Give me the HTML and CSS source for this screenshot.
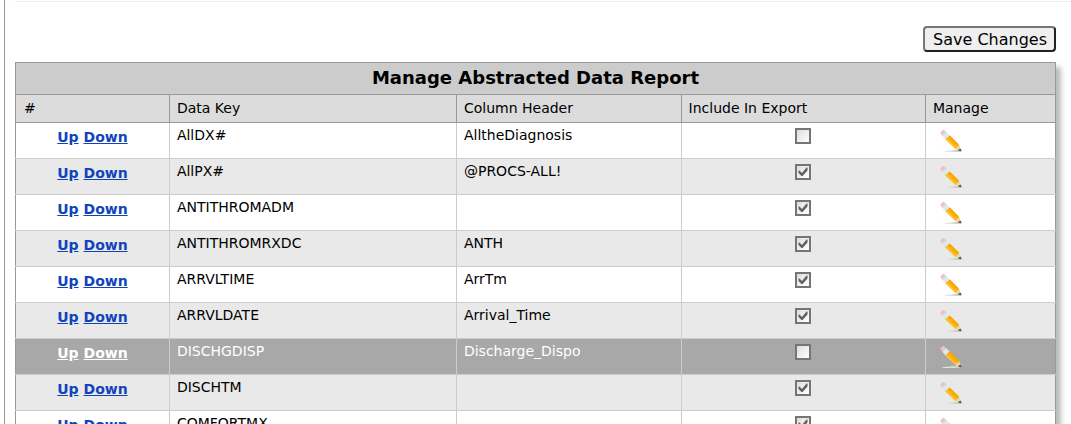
FILE: index.html
```html
<!DOCTYPE html>
<html lang="en">
<head>
<meta charset="utf-8">
<title>Manage Abstracted Data Report</title>
<link rel="stylesheet" href="styles.css">
</head>
<body>
<svg class="defs" width="0" height="0" aria-hidden="true">
  <defs>
    <linearGradient id="shade" x1="0" x2="1" y1="0" y2="0">
      <stop offset="0" stop-color="#f4f4f4"/>
      <stop offset="1" stop-color="#c4c4c4"/>
    </linearGradient>
  </defs>
  <symbol id="pencil" viewBox="0 0 24 24">
    <path d="M3 22.500 19 20.500 22.500 22 20 23H4Z" fill="url(#shade)"/>
    <path d="M1.500 3.500 4.500 1 7 3.500 3.500 6.500Z" fill="#eac6c9" stroke="#e6bfc3" stroke-width=".8" stroke-linejoin="round"/>
    <path d="M3.300 6.700 7.300 3.300 10.800 6.800 6.500 10.500Z" fill="#d8eaee"/>
    <path d="M6.300 10.300 10.800 6.500 20.200 16 16.500 20Z" fill="#fdb00d"/>
    <path d="M6.300 10.300 7.600 9.200 17.700 18.900 16.500 20Z" fill="#ffc535"/>
    <path d="M9.700 7.400 10.800 6.500 20.200 16 19.200 17Z" fill="#f9a400"/>
    <path d="M16.500 20 20.200 16 22.300 21.500 21 22.500Z" fill="#e2d5a8"/>
    <path d="M19.600 21.300 21.300 19.900 22.300 22Z" fill="#555" stroke="#555" stroke-width=".8" stroke-linejoin="round"/>
  </symbol>
</svg>
<main class="page">
  <div class="toolbar"><button class="save" type="button">Save Changes</button></div>
  <table class="report">
    <colgroup><col class="col-order"><col class="col-key"><col class="col-header"><col class="col-export"><col class="col-manage"></colgroup>
    <thead>
      <tr class="title"><th colspan="5">Manage Abstracted Data Report</th></tr>
      <tr class="heads"><th>#</th><th>Data Key</th><th>Column Header</th><th>Include In Export</th><th>Manage</th></tr>
    </thead>
    <tbody>
      <tr><td class="order"><a href="#">Up</a> <a href="#">Down</a></td><td>AllDX#</td><td>AlltheDiagnosis</td><td class="export"><input type="checkbox" aria-label="Include AllDX#"></td><td class="manage"><button type="button" aria-label="Edit AllDX#"><svg><use href="#pencil"/></svg></button></td></tr>
      <tr><td class="order"><a href="#">Up</a> <a href="#">Down</a></td><td>AllPX#</td><td>@PROCS-ALL!</td><td class="export"><input type="checkbox" checked aria-label="Include AllPX#"></td><td class="manage"><button type="button" aria-label="Edit AllPX#"><svg><use href="#pencil"/></svg></button></td></tr>
      <tr><td class="order"><a href="#">Up</a> <a href="#">Down</a></td><td>ANTITHROMADM</td><td></td><td class="export"><input type="checkbox" checked aria-label="Include ANTITHROMADM"></td><td class="manage"><button type="button" aria-label="Edit ANTITHROMADM"><svg><use href="#pencil"/></svg></button></td></tr>
      <tr><td class="order"><a href="#">Up</a> <a href="#">Down</a></td><td>ANTITHROMRXDC</td><td>ANTH</td><td class="export"><input type="checkbox" checked aria-label="Include ANTITHROMRXDC"></td><td class="manage"><button type="button" aria-label="Edit ANTITHROMRXDC"><svg><use href="#pencil"/></svg></button></td></tr>
      <tr><td class="order"><a href="#">Up</a> <a href="#">Down</a></td><td>ARRVLTIME</td><td>ArrTm</td><td class="export"><input type="checkbox" checked aria-label="Include ARRVLTIME"></td><td class="manage"><button type="button" aria-label="Edit ARRVLTIME"><svg><use href="#pencil"/></svg></button></td></tr>
      <tr><td class="order"><a href="#">Up</a> <a href="#">Down</a></td><td>ARRVLDATE</td><td>Arrival_Time</td><td class="export"><input type="checkbox" checked aria-label="Include ARRVLDATE"></td><td class="manage"><button type="button" aria-label="Edit ARRVLDATE"><svg><use href="#pencil"/></svg></button></td></tr>
      <tr class="active"><td class="order"><a href="#">Up</a> <a href="#">Down</a></td><td>DISCHGDISP</td><td>Discharge_Dispo</td><td class="export"><input type="checkbox" aria-label="Include DISCHGDISP"></td><td class="manage"><button type="button" aria-label="Edit DISCHGDISP"><svg><use href="#pencil"/></svg></button></td></tr>
      <tr><td class="order"><a href="#">Up</a> <a href="#">Down</a></td><td>DISCHTM</td><td></td><td class="export"><input type="checkbox" checked aria-label="Include DISCHTM"></td><td class="manage"><button type="button" aria-label="Edit DISCHTM"><svg><use href="#pencil"/></svg></button></td></tr>
      <tr><td class="order"><a href="#">Up</a> <a href="#">Down</a></td><td>COMFORTMX</td><td></td><td class="export"><input type="checkbox" checked aria-label="Include COMFORTMX"></td><td class="manage"><button type="button" aria-label="Edit COMFORTMX"><svg><use href="#pencil"/></svg></button></td></tr>
    </tbody>
  </table>
</main>
</body>
</html>
```
FILE: styles.css
```css
* { box-sizing: border-box; }

html, body { height: 100%; }

body {
  margin: 0;
  overflow: hidden;
  background: #fff;
  color: #000;
  font-family: Verdana, "DejaVu Sans", sans-serif;
  font-size: 14px;
}

.defs { position: absolute; }

.page {
  min-height: 100%;
  margin-left: 4px;
  padding: 1px 15px 0 10px;
  border-left: 1px solid #999;
}

.toolbar {
  display: flex;
  justify-content: flex-end;
  margin-right: -15px;
  padding: 24px 15px 10px 0;
  border-top: 1px solid #eee;
}

.save {
  height: 26px;
  padding: 2px 7px 0 8px;
  border: 2px solid;
  border-color: #767676 #212121 #212121 #767676;
  border-radius: 4px;
  background: #efefef;
  color: #000;
  font: 16px/20px Verdana, "DejaVu Sans", sans-serif;
}

.report {
  width: 100%;
  table-layout: fixed;
  border-collapse: collapse;
  border: 1px solid #999;
  box-shadow: 5px 5px 5px #bbb;
}

.col-order { width: 14.8%; }
.col-key { width: 27.6%; }
.col-header { width: 21.6%; }
.col-export { width: 23.5%; }
.col-manage { width: 12.5%; }

.title th {
  height: 32px;
  padding: 0 0 2px;
  border: 1px solid #999;
  background: #ccc;
  font-size: 18px;
  line-height: 22px;
}

.heads th {
  height: 28px;
  padding: 0 7px 2px;
  border: 1px solid #999;
  background: #dcdcdc;
  font-weight: normal;
  line-height: 18px;
  text-align: left;
}

.heads th:first-child { padding-left: 8px; }

.report td {
  height: 36px;
  padding: 3px 7px 0;
  border: 1px solid #ccc;
  line-height: 18px;
  vertical-align: top;
}

.report td:first-child { border-left-color: #999; }
.report td:last-child { border-right-color: #999; }
.report tbody tr:first-child td { border-top-color: #999; }
tbody tr:nth-child(even) { background: #e9e9e9; }
tbody tr.active { background: #a8a8a8; color: #fff; }

.report .order {
  padding-top: 5px;
  font-weight: bold;
  text-align: center;
}

.order a { color: #14b; }
.active .order a { color: #fff; }

.report .export {
  padding-top: 5px;
  text-align: center;
}

.export input {
  appearance: none;
  display: block;
  width: 16px;
  height: 16px;
  margin: 0 auto;
  border: 2px solid #757575;
  background: linear-gradient(135deg, #ddd, #fff);
}

.export input:checked {
  background: url("data:image/svg+xml,%3Csvg xmlns='http://www.w3.org/2000/svg' viewBox='0 0 12 12'%3E%3Cpath d='M1.500 4.500 2.500 4.500 5 7 9.500 1.500H10.500V4.500L5.500 10H4.500L1.500 7Z' fill='%23606060'/%3E%3C/svg%3E") center / 12px, linear-gradient(135deg, #ddd, #fff);
}

.report .manage { padding: 6px 13px 0; }

.manage button {
  display: block;
  padding: 0;
  border: 0;
  background: none;
}

.manage svg {
  display: block;
  width: 24px;
  height: 24px;
}
```
